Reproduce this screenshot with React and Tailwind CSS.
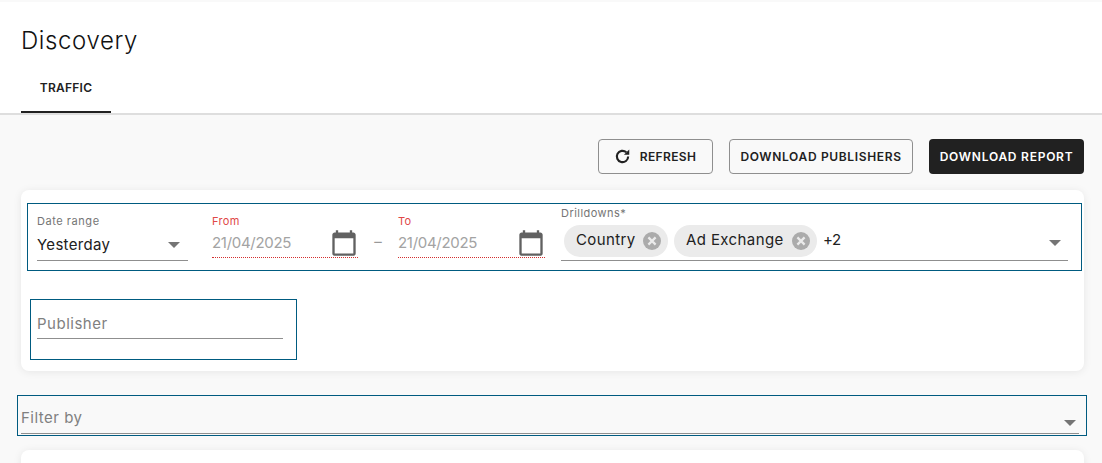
import React from "react";

const sans = "font-['Inter','Liberation_Sans',sans-serif]";

function Caret({ className = "" }) {
  return (
    <svg width="12" height="6" viewBox="0 0 12 6" className={className}>
      <path d="M0 0h12L6 6z" fill="#757575" />
    </svg>
  );
}

function CalendarIcon() {
  return (
    <svg width="28" height="28" viewBox="0 0 24 24" className="shrink-0">
      <path
        fill="#616161"
        d="M20 3h-1V1h-2v2H7V1H5v2H4c-1.1 0-2 .9-2 2v16c0 1.1.9 2 2 2h16c1.1 0 2-.9 2-2V5c0-1.1-.9-2-2-2zm0 18H4V8h16v13z"
      />
    </svg>
  );
}

function Chip({ label, className }) {
  return (
    <div className={`flex h-8 items-center justify-between rounded-full bg-[#ebebeb] pl-3 pr-[7px] ${className}`}>
      <span className="-mt-[3px] text-[15px] leading-none tracking-[0.4px] text-[#212121]">{label}</span>
      <svg width="18" height="18" viewBox="0 0 18 18" className="-mt-[1px]">
        <circle cx="9" cy="9" r="9" fill="#ababab" />
        <path d="M5.4 5.4l7.2 7.2M12.6 5.4l-7.2 7.2" stroke="#ebebeb" strokeWidth="2.2" />
      </svg>
    </div>
  );
}

function DateField({ label, width }) {
  return (
    <div className={`flex h-[54px] flex-col pt-[10px] ${width}`}>
      <span className="h-[15px] text-[11px] leading-[14px] tracking-[0.3px] text-[#e04848]">{label}</span>
      <div className="flex h-[29px] items-center justify-between border-b border-dotted border-b-[#d32f2f]">
        <span className="mt-[1px] text-[15px] tracking-[-0.3px] text-[#a3a3a3]">21/04/2025</span>
        <CalendarIcon />
      </div>
    </div>
  );
}

function OutlineButton({ children, className }) {
  return (
    <button className={`flex h-[35px] items-center justify-center rounded-[4px] border border-[#8f8f8f] text-[12px] font-semibold text-[#212121] ${className}`}>
      {children}
    </button>
  );
}

export default function App() {
  return (
    <div className={`h-[463px] w-[1102px] overflow-hidden bg-[#f9f9f9] pt-[2px] ${sans}`}>
      <header className="h-[113px] border-b-2 border-[#dedede] bg-white pl-[21px]">
        <h1 className="pt-[23px] text-[24px] font-light leading-[32px] tracking-[0.6px] text-[#111111]">Discovery</h1>
        <div className="mt-[11px] flex h-[45px] w-[90px] items-center justify-center border-b-2 border-[#212121]">
          <span className="-mt-[3px] text-[12px] font-semibold tracking-[0.25px] text-[#212121]">TRAFFIC</span>
        </div>
      </header>

      <div className="flex justify-end gap-4 pr-[18px] pt-6">
        <OutlineButton className="w-[115px] gap-[9px] pr-[1px]">
          <svg width="17" height="17" viewBox="0 0 24 24" fill="none" stroke="#212121" strokeWidth="3" className="shrink-0">
            <path d="M20 12a8 8 0 1 1-2.6-5.9" />
            <path d="M21.5 2v7.5H14z" fill="#212121" stroke="none" />
          </svg>
          <span className="tracking-[0.35px]">REFRESH</span>
        </OutlineButton>
        <OutlineButton className="w-[184px] tracking-[0.65px]">DOWNLOAD PUBLISHERS</OutlineButton>
        <button className="flex h-[35px] w-[155px] items-center justify-center rounded-[4px] bg-[#212121] text-[12px] font-semibold tracking-[0.75px] text-white">
          DOWNLOAD REPORT
        </button>
      </div>

      <section className="ml-[21px] mt-4 h-[181px] w-[1063px] rounded-lg bg-white pt-[13px] shadow-[0_1px_8px_rgba(0,0,0,0.08)]">
        <div className="ml-[6px] flex h-[68px] w-[1055px] border border-[#005b80] pl-[9px] pr-[13px]">
          <div className="flex w-[151px] flex-col pt-[10px]">
            <span className="h-[14px] text-[11px] leading-[14px] tracking-[0.55px] text-[#757575]">Date range</span>
            <div className="flex h-[33px] items-center justify-between border-b border-[#8f8f8f] pr-[8px]">
              <span className="mt-[3px] text-[15px] tracking-[0.3px] text-[#212121]">Yesterday</span>
              <Caret className="mt-[2px]" />
            </div>
          </div>
          <div className="w-6 shrink-0" />
          <DateField label="From" width="w-[146px]" />
          <div className="flex h-[54px] w-[40px] shrink-0 justify-center pt-[26px] text-[15px] leading-[24px] text-[#999999]">–</div>
          <DateField label="To" width="w-[147px]" />
          <div className="w-4 shrink-0" />
          <div className="flex flex-1 flex-col">
            <span className="h-[21px] pt-[2px] text-[11px] leading-[14px] tracking-[0.45px] text-[#757575]">Drilldowns*</span>
            <div className="flex h-[36px] items-start border-b border-[#8f8f8f] pl-[3px] pr-[7px]">
              <Chip label="Country" className="w-[104px]" />
              <Chip label="Ad Exchange" className="ml-[6px] w-[143px]" />
              <span className="ml-[6px] text-[15px] leading-[30px] tracking-[-0.4px] text-[#212121]">+2</span>
              <Caret className="ml-auto mt-[15px]" />
            </div>
          </div>
        </div>

        <div className="ml-[9px] mt-[28px] h-[61px] w-[267px] border border-[#005b80] pl-[6px] pr-[13px]">
          <div className="flex h-[39px] items-end border-b border-[#8f8f8f] pb-[4px]">
            <span className="text-[15px] leading-[20px] tracking-[0.5px] text-[#808080]">Publisher</span>
          </div>
        </div>
      </section>

      <div className="ml-[17px] mt-6 flex h-[41px] w-[1070px] border border-[#005b80] pl-[3px] pr-[7px]">
        <div className="flex h-[38px] flex-1 items-end justify-between border-b border-[#8f8f8f] pb-[5px] pr-[3px]">
          <span className="text-[15px] leading-[20px] tracking-[0.5px] text-[#808080]">Filter by</span>
          <Caret className="mb-[2px]" />
        </div>
      </div>

      <section className="ml-[21px] mt-[14px] h-[40px] w-[1063px] rounded-lg bg-white shadow-[0_1px_8px_rgba(0,0,0,0.08)]" />
    </div>
  );
}
